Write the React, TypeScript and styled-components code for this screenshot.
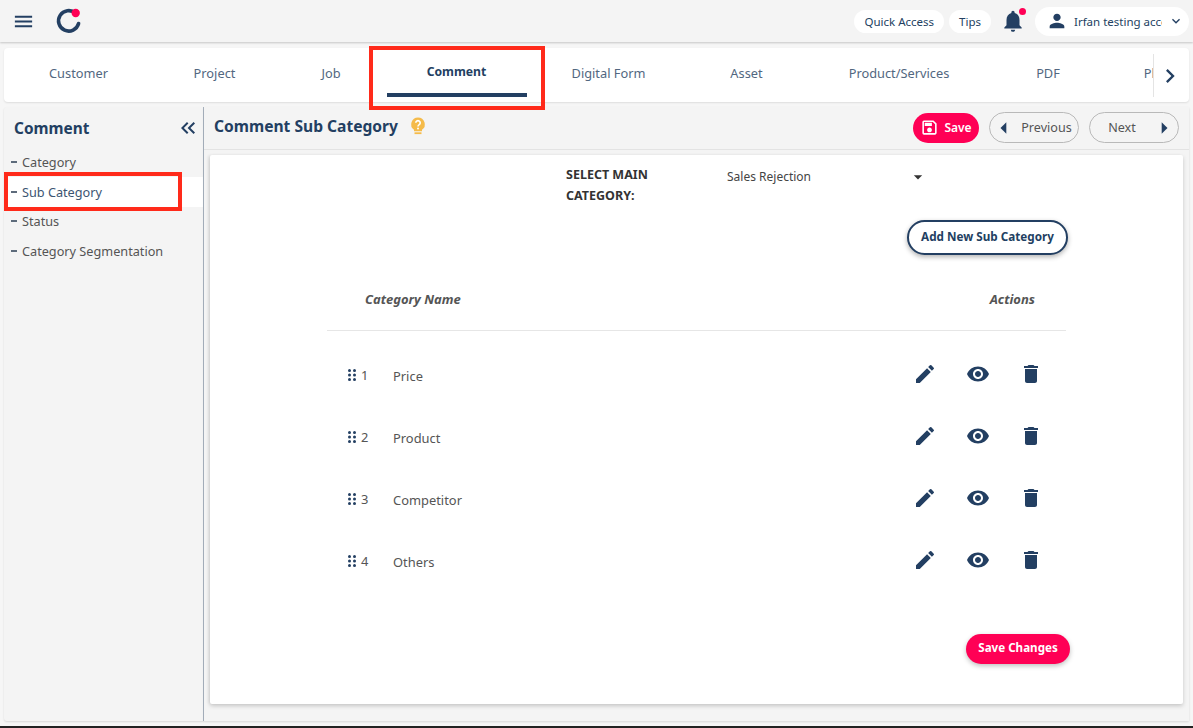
import React from "react";
import styled, { createGlobalStyle } from "styled-components";
import {
  MdMenu, MdNotifications, MdPerson, MdKeyboardArrowDown, MdChevronRight,
  MdKeyboardDoubleArrowLeft, MdOutlineSave, MdArrowDropDown,
  MdEdit, MdVisibility, MdDelete, MdArrowLeft, MdArrowRight,
} from "react-icons/md";

const NAVY = "#233f62";
const PINK = "#ff0055";
const FONT = `"Noto Sans", "Open Sans", sans-serif`;

const Global = createGlobalStyle`
  html, body { margin: 0; padding: 0; background: #f6f6f6; }
  body { font-family: ${FONT}; width: 1193px; height: 728px; overflow: hidden; }
  * { box-sizing: border-box; }
`;

const Page = styled.div`
  position: relative; width: 1193px; height: 728px; display: flex; flex-direction: column;
  background: #f6f6f6; border-bottom: 2px solid #222; overflow: hidden;
`;
const TopBar = styled.header`
  height: 42px; flex: none; display: flex; align-items: center; justify-content: space-between;
  padding: 0 4px 0 12px; background: #f4f4f4; box-shadow: 0 1px 2px rgba(0,0,0,.2);
`;
const Left = styled.div`display: flex; align-items: center; gap: 20px; color: ${NAVY};`;
const Right = styled.div`display: flex; align-items: center; color: ${NAVY};`;
const Pill = styled.button`
  height: 23px; border: 0; border-radius: 12px; background: #fff; color: ${NAVY};
  font: 400 11.5px ${FONT}; padding: 0 10px; margin-right: 5px; white-space: nowrap;
`;
const BellWrap = styled.span`position: relative; display: flex; margin: 0 9px 0 4px;`;
const Dot = styled.span`
  position: absolute; right: 0; top: 0; width: 7px; height: 7px; border-radius: 50%; background: ${PINK};
`;
const UserPill = styled.div`
  width: 154px; height: 29px; border-radius: 15px; background: #fff; display: flex; align-items: center;
  padding: 0 5px 0 11px; gap: 6px; font-size: 11.5px; white-space: nowrap;
`;
const UserName = styled.span`width: 88px; overflow: hidden; color: ${NAVY};`;

const TabBar = styled.nav`
  height: 54px; flex: none; margin: 6px 4px 0; background: #fff; border-radius: 4px; display: flex;
  box-shadow: 0 1px 2px rgba(0,0,0,.1); overflow: hidden;
`;
const TabList = styled.div`flex: 1; min-width: 0; display: flex; overflow: hidden; padding-left: 2px;`;
const Tab = styled.div<{ $w: number; $active?: boolean }>`
  flex: none; width: ${p => p.$w}px; position: relative; display: flex; align-items: center; justify-content: center;
  font-size: ${p => (p.$active ? 12.2 : 12.8)}px; color: ${p => (p.$active ? NAVY : "#52677f")}; font-weight: ${p => (p.$active ? 700 : 400)};
  padding-bottom: ${p => (p.$active ? 8 : 4)}px;
  &::after {
    content: ""; display: ${p => (p.$active ? "block" : "none")};
    position: absolute; left: 3px; right: 2px; bottom: 5px; height: 4px; background: ${NAVY};
  }
`;
const TabNext = styled.div`
  width: 36px; flex: none; border-left: 1px solid #e4e4e4; margin: 6px 0 5px; display: flex; align-items: center;
  justify-content: center; color: ${NAVY}; padding-right: 4px;
`;

const Body = styled.div`flex: 1; min-height: 0; display: flex; margin: 5px 4px 5px;`;
const Side = styled.aside`
  width: 200px; flex: none; background: #f4f4f4; border-right: 1px solid #a9b4c0; border-radius: 3px 0 0 3px;
  box-shadow: 0 1px 2px rgba(0,0,0,.12);
`;
const SideHead = styled.div`
  height: 42px; display: flex; align-items: center; justify-content: space-between; padding: 0 3px 0 10px;
  font-size: 15.4px; font-weight: 700; color: ${NAVY};
`;
const SideItems = styled.div`margin-top: -1.5px;`;
const SideItem = styled.div<{ $active?: boolean }>`
  height: 29.6px; display: flex; align-items: center; gap: 5px; padding-left: 7px; font-size: 12.7px;
  color: ${p => (p.$active ? "#3c5572" : "#555")}; background: ${p => (p.$active ? "#fff" : "transparent")};
  &::before { content: ""; width: 6px; height: 2px; background: #5d6b7b; }
`;
const Main = styled.main`flex: 1; min-width: 0; display: flex; flex-direction: column; background: #f4f4f4; box-shadow: 0 1px 2px rgba(0,0,0,.12);`;
const MainHead = styled.div`
  height: 43px; flex: none; display: flex; align-items: center; justify-content: space-between; padding: 0 10px 1px 10px;
  border-bottom: 1px solid #e3e3e3;
`;
const Title = styled.h1`
  margin: 0 0 4px; display: flex; align-items: center; gap: 12px; font-size: 15.6px; font-weight: 700; color: ${NAVY};
`;
const HeadActions = styled.div`display: flex; align-items: center; gap: 10px;`;
const SaveBtn = styled.button`
  width: 66px; height: 30px; border: 0; border-radius: 15px; background: ${PINK}; color: #fff; display: flex;
  align-items: center; justify-content: center; gap: 5px; padding: 0; font: 600 12px ${FONT};
`;
const NavBtn = styled.button<{ $shift: number }>`
  width: 90px; height: 31px; border: 1px solid #b9b9b9; border-radius: 16px; background: transparent; display: flex;
  align-items: center; justify-content: space-between; padding: 0; font: 400 12.6px ${FONT}; color: #555;
  svg { color: ${NAVY}; flex: none; }
  span { padding-left: ${p => Math.max(p.$shift, 0)}px; padding-right: ${p => Math.max(-p.$shift, 0)}px; }
`;
const NavText = styled.span`flex: 1; text-align: center; margin-top: -1px;`;
const Card = styled.section`
  flex: 1; min-height: 0; margin: 5px 6px 17px; background: #fff; border-radius: 2px;
  box-shadow: 0 2px 4px rgba(0,0,0,.18), -2px 0 3px rgba(0,0,0,.05); padding: 9px 117px 0 117px; display: flex; flex-direction: column;
`;
const SelectRow = styled.div`display: flex; height: 56px; padding-left: 239px;`;
const SelectLabel = styled.label`
  width: 161px; flex: none; font-size: 12.5px; line-height: 21px; font-weight: 700; color: #333;
`;
const SelectBox = styled.div`
  width: 197px; flex: none; height: 25px; display: flex; align-items: center; justify-content: space-between;
  font-size: 12px; color: #444; svg { color: #333; margin-right: -4px; }
`;
const AddRow = styled.div`display: flex; justify-content: flex-end; margin-right: -2px;`;
const AddBtn = styled.button`
  width: 161px; height: 35px; border: 2px solid ${NAVY}; border-radius: 18px; background: #fff; color: ${NAVY};
  font: 700 11.7px ${FONT}; box-shadow: 0 2px 5px rgba(0,0,0,.3); padding: 0 0 3px;
`;
const TableHead = styled.div`
  height: 76px; display: flex; align-items: center; justify-content: space-between; padding: 12px 31px 0 38px;
  border-bottom: 1px solid #e6e6e6; font-size: 13px; font-weight: 700; font-style: italic; color: #555;
`;
const Rows = styled.div`margin-top: 13px;`;
const Row = styled.div`
  height: 62px; display: flex; align-items: center; font-size: 12.9px; color: #555;
`;
const Grip = styled.span`
  width: 66px; flex: none; display: flex; align-items: center; gap: 5px; padding-left: 21px; margin-top: -1px; color: #555;
`;
const Name = styled.span`flex: 1; margin-top: 2px;`;
const Actions = styled.div`display: flex; width: 130px; margin-top: -3px; margin-right: 23px; justify-content: space-between; color: ${NAVY}; flex: none;`;
const Footer = styled.div`display: flex; justify-content: flex-end; margin-top: 42px;`;
const SaveChanges = styled.button`
  width: 104px; height: 30px; border: 0; border-radius: 15px; background: ${PINK}; color: #fff; font: 700 11.6px ${FONT};
  box-shadow: 0 2px 5px rgba(0,0,0,.25); padding: 0 0 3px; margin-right: -4px;
`;
const Mark = styled.div<{ $x: number; $y: number; $w: number; $h: number }>`
  position: absolute; left: ${p => p.$x}px; top: ${p => p.$y}px; width: ${p => p.$w}px; height: ${p => p.$h}px;
  border: 4px solid #ff2a1a; pointer-events: none;
`;

const Logo = () => (
  <svg width="30" height="30" viewBox="0 0 30 30">
    <path d="M20.5 7.2 A10.2 10.2 0 1 0 23.6 17.5" fill="none" stroke={NAVY} strokeWidth="3.6" strokeLinecap="round" />
    <circle cx="20.7" cy="7" r="4.2" fill={PINK} />
  </svg>
);

const Bulb = () => (
  <svg width="16" height="18" viewBox="0 0 16 18">
    <path d="M8 0.5a6.8 6.8 0 0 0-4 12.3v1.4h8v-1.4A6.8 6.8 0 0 0 8 0.5z" fill="#f5bb4a" />
    <rect x="4.5" y="15.3" width="7" height="1.8" fill="#f5bb4a" />
    <path d="M5.8 5.8a2.2 2.2 0 1 1 3.4 1.9C8.3 8.3 8 8.7 8 9.6" fill="none" stroke="#fff" strokeWidth="1.6" />
    <circle cx="8" cy="11.4" r="1" fill="#fff" />
  </svg>
);

const GripIcon = () => (
  <svg width="8" height="12" viewBox="0 0 8 12" fill={NAVY}>
    {[1.5, 6, 10.5].flatMap(y => [1.5, 6.5].map(x => <circle key={`${x}-${y}`} cx={x} cy={y} r="1.5" />))}
  </svg>
);

const tabs: [string, number][] = [
  ["Customer", 145], ["Project", 127], ["Job", 106], ["Comment", 145], ["Digital Form", 159],
  ["Asset", 117], ["Product/Services", 188], ["PDF", 110], ["Phone", 120],
];
const rows = ["Price", "Product", "Competitor", "Others"];

export default function App() {
  return (
    <Page>
      <Global />
      <TopBar>
        <Left>
          <MdMenu size={23} />
          <Logo />
        </Left>
        <Right>
          <Pill>Quick Access</Pill>
          <Pill>Tips</Pill>
          <BellWrap><MdNotifications size={26} /><Dot /></BellWrap>
          <UserPill>
            <MdPerson size={22} />
            <UserName>Irfan testing account</UserName>
            <MdKeyboardArrowDown size={16} />
          </UserPill>
        </Right>
      </TopBar>
      <TabBar>
        <TabList>
          {tabs.map(([t, w]) => <Tab key={t} $w={w} $active={t === "Comment"}>{t}</Tab>)}
        </TabList>
        <TabNext><MdChevronRight size={28} /></TabNext>
      </TabBar>
      <Body>
        <Side>
          <SideHead>Comment <MdKeyboardDoubleArrowLeft size={24} /></SideHead>
          <SideItems>
            <SideItem>Category</SideItem>
            <SideItem $active>Sub Category</SideItem>
            <SideItem>Status</SideItem>
            <SideItem>Category Segmentation</SideItem>
          </SideItems>
        </Side>
        <Main>
          <MainHead>
            <Title>Comment Sub Category <Bulb /></Title>
            <HeadActions>
              <SaveBtn><MdOutlineSave size={19} />Save</SaveBtn>
              <NavBtn $shift={-3}><MdArrowLeft size={28} /><NavText>Previous</NavText></NavBtn>
              <NavBtn $shift={4}><NavText>Next</NavText><MdArrowRight size={28} /></NavBtn>
            </HeadActions>
          </MainHead>
          <Card>
            <SelectRow>
              <SelectLabel>SELECT MAIN<br />CATEGORY:</SelectLabel>
              <SelectBox>Sales Rejection <MdArrowDropDown size={20} /></SelectBox>
            </SelectRow>
            <AddRow><AddBtn>Add New Sub Category</AddBtn></AddRow>
            <TableHead><span>Category Name</span><span>Actions</span></TableHead>
            <Rows>
              {rows.map((r, i) => (
                <Row key={r}>
                  <Grip><GripIcon />{i + 1}</Grip>
                  <Name>{r}</Name>
                  <Actions><MdEdit size={24} /><MdVisibility size={24} /><MdDelete size={24} /></Actions>
                </Row>
              ))}
            </Rows>
            <Footer><SaveChanges>Save Changes</SaveChanges></Footer>
          </Card>
        </Main>
      </Body>
      <Mark $x={369} $y={46} $w={176} $h={64} />
      <Mark $x={4} $y={172} $w={178} $h={39} />
    </Page>
  );
}
